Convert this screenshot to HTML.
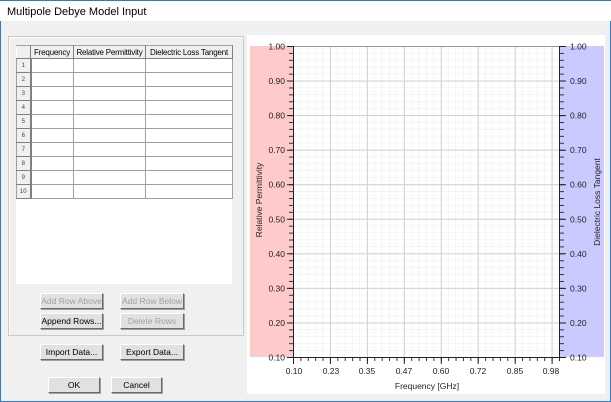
<!DOCTYPE html>
<html><head><meta charset="utf-8"><style>
*{margin:0;padding:0;box-sizing:border-box}
body{width:611px;height:402px;overflow:hidden;background:#f0f0f0;font-family:"Liberation Sans",Arial,sans-serif;font-size:11px;position:relative;color:#000}
.win{position:absolute;left:0;top:0;width:611px;height:402px;border:1px solid #2b79d8;border-top:none}
.title{position:absolute;left:0;top:0;width:611px;height:21px;background:#fff;font-size:11px;padding:5px 0 0 7px;border-top:1px solid #2b79d8}
.grp{position:absolute;left:8px;top:36px;width:236px;height:300px;border:1px solid #c8c8c8;box-shadow:inset 1px 1px 0 #fff}
.tbl{position:absolute;left:16px;top:45px;width:216px;height:239px;background:#fff}
table{border-collapse:collapse;font-size:8px;position:absolute;left:16px;top:45px;table-layout:fixed;width:216px}
td{border:1px solid #a0a0a0;height:14px;padding:0;white-space:nowrap;overflow:hidden}
.hd td{background:#f0f0f0;text-align:center;font-size:8px;height:13px;letter-spacing:-0.2px;border-color:#a0a0a0 #808080 #808080 #fff}
td.rh{background:#f0f0f0;font-size:6px;text-align:center;color:#444;border-right:2px solid #808080;border-bottom:1px solid #808080}
.btn{position:absolute;height:16px;background:#e1e1e1;border:1px solid #fff;border-right-color:#696969;border-bottom-color:#696969;box-shadow:1px 1px 0 #a0a0a0;font-size:8.5px;text-align:center;line-height:14px;white-space:nowrap}
.dis{color:#a0a0a0}
.chart{position:absolute;left:247px;top:35px;width:358px;height:359px;background:#fff}
</style></head><body>
<div class="win"></div>
<div class="title">Multipole Debye Model Input</div>
<div class="grp"></div>
<div class="tbl"></div>
<table>
<colgroup><col style="width:14px"><col style="width:43px"><col style="width:72px"><col style="width:87px"></colgroup>
<tr class="hd"><td></td><td>Frequency</td><td>Relative Permittivity</td><td>Dielectric Loss Tangent</td></tr>
<tr><td class="rh">1</td><td></td><td></td><td></td></tr>
<tr><td class="rh">2</td><td></td><td></td><td></td></tr>
<tr><td class="rh">3</td><td></td><td></td><td></td></tr>
<tr><td class="rh">4</td><td></td><td></td><td></td></tr>
<tr><td class="rh">5</td><td></td><td></td><td></td></tr>
<tr><td class="rh">6</td><td></td><td></td><td></td></tr>
<tr><td class="rh">7</td><td></td><td></td><td></td></tr>
<tr><td class="rh">8</td><td></td><td></td><td></td></tr>
<tr><td class="rh">9</td><td></td><td></td><td></td></tr>
<tr><td class="rh">10</td><td></td><td></td><td></td></tr>
</table>
<div class="btn dis" style="left:40px;top:293px;width:63px">Add Row Above</div>
<div class="btn dis" style="left:120px;top:293px;width:64px">Add Row Below</div>
<div class="btn" style="left:40px;top:313px;width:63px">Append Rows...</div>
<div class="btn dis" style="left:120px;top:313px;width:64px">Delete Rows</div>
<div class="btn" style="left:40px;top:344px;width:63px">Import Data...</div>
<div class="btn" style="left:120px;top:344px;width:64px">Export Data...</div>
<div class="btn" style="left:48px;top:377px;width:52px">OK</div>
<div class="btn" style="left:111px;top:377px;width:51px">Cancel</div>
<div class="chart"></div>
<svg width="611" height="402" style="position:absolute;left:0;top:0" font-family="Liberation Sans,Arial,sans-serif" font-size="8.5">
<defs>
<pattern id="mn" patternUnits="userSpaceOnUse" x="293" y="46" width="7.389" height="6.911"><path d="M0 0V6.911M0 0H7.389" stroke="#ececec" stroke-width="1" fill="none"/></pattern>
<pattern id="mj" patternUnits="userSpaceOnUse" x="293" y="46" width="36.944" height="34.556"><path d="M0.5 0V34.556M0 0.5H36.944" stroke="#d0d0d0" stroke-width="1" fill="none"/></pattern>
<pattern id="yt" patternUnits="userSpaceOnUse" x="0" y="46" width="611" height="6.911"><path d="M0 0.5H611" stroke="#333" fill="none"/></pattern>
<pattern id="xt" patternUnits="userSpaceOnUse" x="293" y="0" width="7.389" height="402"><path d="M0.5 0V402" stroke="#333" fill="none"/></pattern>
</defs>
<rect x="250" y="46" width="43" height="311" fill="#ffcaca"/>
<rect x="559" y="46" width="45" height="311" fill="#cacaff"/>
<rect x="293" y="46" width="266" height="311" fill="url(#mn)"/>
<rect x="293" y="46" width="266" height="311" fill="url(#mj)"/>
<line x1="293" y1="46.5" x2="559" y2="46.5" stroke="#999"/>
<rect x="289" y="46" width="4" height="311" fill="url(#yt)"/>
<rect x="560" y="46" width="4" height="311" fill="url(#yt)"/>
<rect x="293" y="357" width="266" height="4" fill="url(#xt)"/>
<line x1="293.5" y1="46" x2="293.5" y2="361" stroke="#222"/>
<line x1="559.5" y1="46" x2="559.5" y2="361" stroke="#222"/>
<line x1="289" y1="357.5" x2="559" y2="357.5" stroke="#222"/>
<g stroke="#222"><path d="M287 46.5H293M287 81H293M287 115.6H293M287 150.2H293M287 184.7H293M287 219.3H293M287 253.8H293M287 288.4H293M287 323H293M287 357.5H293"/><path d="M559 46.5H566M559 81H566M559 115.6H566M559 150.2H566M559 184.7H566M559 219.3H566M559 253.8H566M559 288.4H566M559 323H566M559 357.5H566"/>
<path d="M293.5 357V364M330.4 357V364M367.4 357V364M404.3 357V364M441.3 357V364M478.2 357V364M515.2 357V364M552.1 357V364"/></g>
<g fill="#222" text-anchor="end"><text x="285" y="49.5">1.00</text><text x="285" y="84">0.90</text><text x="285" y="118.6">0.80</text><text x="285" y="153.2">0.70</text><text x="285" y="187.7">0.60</text><text x="285" y="222.3">0.50</text><text x="285" y="256.8">0.40</text><text x="285" y="291.4">0.30</text><text x="285" y="326">0.20</text><text x="285" y="360.5">0.10</text></g>
<g fill="#222"><text x="570" y="49.5">1.00</text><text x="570" y="84">0.90</text><text x="570" y="118.6">0.80</text><text x="570" y="153.2">0.70</text><text x="570" y="187.7">0.60</text><text x="570" y="222.3">0.50</text><text x="570" y="256.8">0.40</text><text x="570" y="291.4">0.30</text><text x="570" y="326">0.20</text><text x="570" y="360.5">0.10</text></g>
<g fill="#222" text-anchor="middle"><text x="294" y="374">0.10</text><text x="331" y="374">0.23</text><text x="367" y="374">0.35</text><text x="404" y="374">0.47</text><text x="441" y="374">0.60</text><text x="478" y="374">0.72</text><text x="515" y="374">0.85</text><text x="551" y="374">0.98</text>
<text x="427" y="389">Frequency [GHz]</text>
<text transform="translate(262,200) rotate(-90)">Relative Permittivity</text>
<text transform="translate(600,202) rotate(-90)">Dielectric Loss Tangent</text></g>
</svg>
</body></html>
